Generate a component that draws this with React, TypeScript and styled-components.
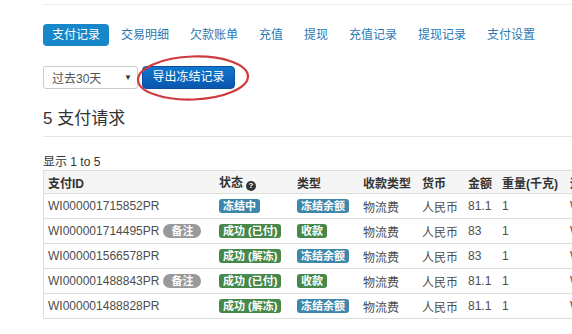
import React from "react";
import styled, { createGlobalStyle, css } from "styled-components";

const GlobalStyle = createGlobalStyle`
  html, body {
    margin: 0;
    padding: 0;
    background: #ffffff;
    overflow: hidden;
  }
  body {
    font-family: "Liberation Sans", "Noto Sans CJK SC", sans-serif;
    color: #333;
  }
`;

const Page = styled.div`
  width: 572px;
  height: 334px;
  overflow: hidden;
  box-sizing: border-box;
  padding: 4px 0 0 43px;
`;

const TopRule = styled.div`
  border-top: 1px solid #eeeeee;
  margin-left: -1px;
`;

const Tabs = styled.nav`
  display: flex;
  margin-top: 19px;
  height: 22px;
`;

const Tab = styled.a<{ $active?: boolean }>`
  display: block;
  padding: 0 9px;
  margin-right: 3px;
  line-height: 22px;
  font-size: 12px;
  border-radius: 4px;
  color: #2b78b5;
  text-decoration: none;
  white-space: nowrap;
  ${(p) =>
    p.$active &&
    css`
      background: #1787c9;
      color: #ffffff;
    `}
`;

const Toolbar = styled.div`
  position: relative;
  display: flex;
  align-items: center;
  gap: 4px;
  margin-top: 20px;
  height: 23px;
`;

const Select = styled.div`
  box-sizing: border-box;
  width: 95px;
  height: 23px;
  border: 1px solid #cccccc;
  border-radius: 3px;
  background: #fff;
  display: flex;
  align-items: center;
  justify-content: space-between;
  padding: 0 5px 0 8px;
  font-size: 12px;
  color: #555;
`;

const Caret = styled.span`
  font-size: 8px;
  color: #333;
  line-height: 1;
`;

const ExportButton = styled.button`
  box-sizing: border-box;
  width: 93px;
  height: 23px;
  padding: 0;
  border: 1px solid #0b4f9e;
  border-radius: 4px;
  background: linear-gradient(to bottom, #1077cf, #0956ae);
  color: #ffffff;
  font-family: inherit;
  font-size: 12px;
  line-height: 21px;
  cursor: pointer;
`;

const Annotation = styled.svg`
  position: absolute;
  left: 93px;
  top: -11px;
  width: 114px;
  height: 48px;
  pointer-events: none;
  overflow: visible;
`;

const Heading = styled.h3`
  margin: 20px 0 0 0;
  padding-bottom: 7px;
  font-size: 17px;
  line-height: 20px;
  font-weight: normal;
  color: #333;
  border-bottom: 1px solid #e5e5e5;
`;

const Showing = styled.div`
  margin-top: 18px;
  font-size: 12px;
  line-height: 15px;
  color: #333;
`;

const Table = styled.table`
  border-collapse: separate;
  border-spacing: 0;
  table-layout: fixed;
  width: 721px;
  border-left: 1px solid #dddddd;
  font-size: 12px;
`;

const HeadCell = styled.th`
  height: 22px;
  padding: 0 5px;
  text-align: left;
  font-weight: bold;
  color: #333;
  background: #f5f5f5;
  border-top: 1px solid #dddddd;
  white-space: nowrap;
  overflow: hidden;
  &:first-child {
    padding-left: 4px;
  }
`;

const Row = styled.tr`
  &:last-child td {
    border-bottom: 1px solid #dddddd;
  }
`;

const Cell = styled.td`
  height: 24px;
  padding: 0 5px;
  color: #4d4d4d;
  border-top: 1px solid #dddddd;
  white-space: nowrap;
  overflow: hidden;
  vertical-align: middle;
  &:first-child {
    padding-left: 4px;
  }
`;

type Tone = "info" | "success";

const Label = styled.span<{ $tone: Tone }>`
  display: inline-block;
  padding: 0 4px;
  font-size: 11px;
  line-height: 14px;
  font-weight: bold;
  color: #ffffff;
  border-radius: 3px;
  background: ${(p) => (p.$tone === "info" ? "#3d87ab" : "#46874a")};
`;

const Badge = styled.span`
  display: inline-block;
  margin-left: 4px;
  padding: 0 8px;
  font-size: 11px;
  line-height: 14px;
  font-weight: bold;
  color: #ffffff;
  background: #999999;
  border-radius: 7px;
`;

const HelpIcon = styled.span`
  display: inline-flex;
  align-items: center;
  justify-content: center;
  width: 10px;
  height: 10px;
  margin-left: 3px;
  border-radius: 50%;
  background: #333;
  color: #fff;
  font-size: 8px;
  font-weight: bold;
  line-height: 1;
  vertical-align: -1px;
`;

const tabs = ["支付记录", "交易明细", "欠款账单", "充值", "提现", "充值记录", "提现记录", "支付设置"];

const columns = [170, 78, 66, 59, 46, 34, 68, 200];

type RowData = {
  id: string;
  note: boolean;
  status: [string, Tone];
  type: [string, Tone];
  amount: string;
  waybill: string;
};

const rows: RowData[] = [
  { id: "WI000001715852PR", note: false, status: ["冻结中", "info"], type: ["冻结余额", "info"], amount: "81.1", waybill: "WB0001715852" },
  { id: "WI000001714495PR", note: true, status: ["成功 (已付)", "success"], type: ["收款", "success"], amount: "83", waybill: "WB0001714495" },
  { id: "WI000001566578PR", note: false, status: ["成功 (解冻)", "success"], type: ["冻结余额", "info"], amount: "83", waybill: "WB0001566578" },
  { id: "WI000001488843PR", note: true, status: ["成功 (已付)", "success"], type: ["收款", "success"], amount: "81.1", waybill: "WB0001488843" },
  { id: "WI000001488828PR", note: false, status: ["成功 (解冻)", "success"], type: ["冻结余额", "info"], amount: "81.1", waybill: "WB0001488828" },
];

export default function App() {
  return (
    <>
      <GlobalStyle />
      <Page>
        <TopRule />
        <Tabs>
          {tabs.map((t, i) => (
            <Tab key={t} $active={i === 0}>
              {t}
            </Tab>
          ))}
        </Tabs>
        <Toolbar>
          <Select>
            <span>过去30天</span>
            <Caret>▼</Caret>
          </Select>
          <ExportButton>导出冻结记录</ExportButton>
          <Annotation viewBox="0 0 114 48">
            <ellipse
              cx="57"
              cy="23"
              rx="55"
              ry="21.5"
              fill="none"
              stroke="#cf3a3f"
              strokeWidth="2.2"
              transform="rotate(-2 57 23)"
            />
          </Annotation>
        </Toolbar>
        <Heading>5 支付请求</Heading>
        <Showing>显示 1 to 5</Showing>
        <Table>
          <colgroup>
            {columns.map((w, i) => (
              <col key={i} style={{ width: w }} />
            ))}
          </colgroup>
          <thead>
            <tr>
              <HeadCell>支付ID</HeadCell>
              <HeadCell>
                状态<HelpIcon>?</HelpIcon>
              </HeadCell>
              <HeadCell>类型</HeadCell>
              <HeadCell>收款类型</HeadCell>
              <HeadCell>货币</HeadCell>
              <HeadCell>金额</HeadCell>
              <HeadCell>重量(千克)</HeadCell>
              <HeadCell>运单号</HeadCell>
            </tr>
          </thead>
          <tbody>
            {rows.map((r) => (
              <Row key={r.id}>
                <Cell>
                  {r.id}
                  {r.note && <Badge>备注</Badge>}
                </Cell>
                <Cell>
                  <Label $tone={r.status[1]}>{r.status[0]}</Label>
                </Cell>
                <Cell>
                  <Label $tone={r.type[1]}>{r.type[0]}</Label>
                </Cell>
                <Cell>物流费</Cell>
                <Cell>人民币</Cell>
                <Cell>{r.amount}</Cell>
                <Cell>1</Cell>
                <Cell>{r.waybill}</Cell>
              </Row>
            ))}
          </tbody>
        </Table>
      </Page>
    </>
  );
}
